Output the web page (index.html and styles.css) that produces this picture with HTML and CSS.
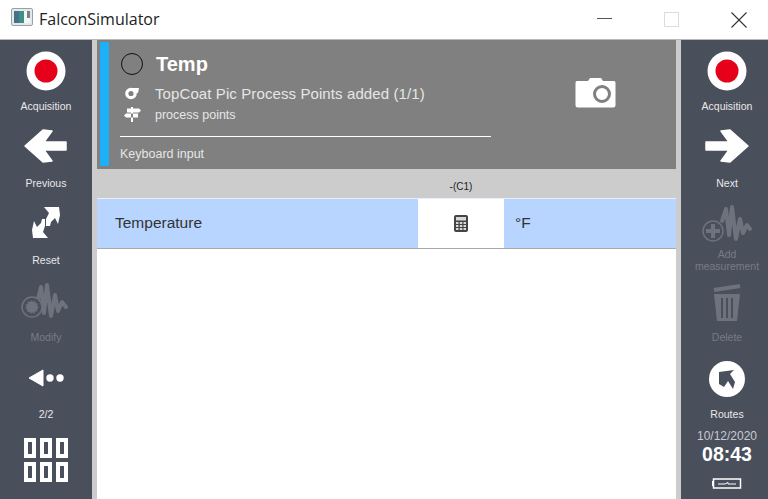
FILE: index.html
```html
<!DOCTYPE html>
<html lang="en">
<head>
<meta charset="utf-8">
<title>FalconSimulator</title>
<link rel="stylesheet" href="styles.css">
</head>
<body>
<div class="window">
  <header class="titlebar">
    <svg class="app-icon" width="22" height="18" viewBox="0 0 22 18">
      <rect x="0.5" y="0.5" width="21" height="17" rx="1.5" fill="#e4e8e8" stroke="#9aa3a4"/>
      <rect x="3" y="3" width="10" height="12" fill="#3f8f86"/>
      <rect x="3" y="3" width="5" height="12" fill="#47708a"/>
      <rect x="13" y="3" width="6" height="12" fill="#f4f6f6"/>
      <rect x="16" y="3" width="3" height="7" fill="#76828a"/>
    </svg>
    <span class="app-name">FalconSimulator</span>
    <div class="win-controls">
      <span class="win-btn"><span class="win-min"></span></span>
      <span class="win-btn"><span class="win-max"></span></span>
      <span class="win-btn">
        <svg width="16" height="16" viewBox="0 0 16 16"><path d="M0.5 0.5 15.5 15.5M15.5 0.5 0.5 15.5" stroke="#333" stroke-width="1.1" fill="none"/></svg>
      </span>
    </div>
  </header>

  <div class="app">
    <aside class="side side-left">
      <div class="tool">
        <svg width="60" height="56" viewBox="16 40 60 56"><circle cx="46" cy="71" r="19.5" fill="#fff"/><circle cx="46" cy="71" r="11.5" fill="#e60019"/></svg>
        <span class="tool-label">Acquisition</span>
      </div>
      <div class="tool">
        <svg width="60" height="56" viewBox="16 117 60 56"><path d="M25 146 43 130 52 131 44 142H66V150H44L52 161 43 162Z" fill="#fff" stroke="#fff" stroke-width="1.5" stroke-linejoin="round"/></svg>
        <span class="tool-label">Previous</span>
      </div>
      <div class="tool">
        <svg width="60" height="56" viewBox="16 194 60 56"><path d="M44 207H59L60 215 58 224 55 218 51 222 50 226H46V219L49 213Z" fill="#fff"/><path d="M48 238H33L32 230 34 221 37 227 41 223 42 219H45V226L43 232Z" fill="#fff"/></svg>
        <span class="tool-label">Reset</span>
      </div>
      <div class="tool">
        <svg width="60" height="56" viewBox="16 271 60 56"><path d="M38 299 41 287 44 313 47 285 51 316 55 295 58 311 62 302 66 307" fill="none" stroke="#6e727d" stroke-width="4" stroke-linejoin="round" stroke-linecap="round"/><circle cx="32" cy="307" r="10" fill="#4a4f5c" stroke="#6e727d" stroke-width="1.5"/><circle cx="32" cy="307" r="5.5" fill="#6e727d" stroke="#6e727d" stroke-width="2" stroke-dasharray="1.5 1.5"/></svg>
        <span class="tool-label tool-label-off">Modify</span>
      </div>
      <div class="tool">
        <svg width="60" height="56" viewBox="16 348 60 56"><path d="M29 378 43 370V386Z" fill="#fff" stroke="#fff" stroke-linejoin="round"/><circle cx="50" cy="378" r="3.7" fill="#fff"/><circle cx="60" cy="378" r="3.7" fill="#fff"/></svg>
        <span class="tool-label">2/2</span>
      </div>
      <div class="grid-btn">
        <span></span><span></span><span></span>
        <span></span><span></span><span></span>
      </div>
    </aside>

    <main class="main">
      <section class="card">
        <div class="card-bar"></div>
        <div class="card-info">
          <div class="card-title-row">
            <span class="status-ring"></span>
            <span class="card-title">Temp</span>
          </div>
          <div class="card-row">
            <svg class="card-icon" width="24" height="16" viewBox="0 0 24 16"><circle cx="11" cy="8.5" r="4.2" fill="none" stroke="#fff" stroke-width="3.2"/><path d="M11 3H19L18 8H14Z" fill="#fff"/></svg>
            <span class="card-text">TopCoat Pic Process Points added (1/1)</span>
          </div>
          <div class="card-row card-row-small">
            <svg class="card-icon" width="24" height="16" viewBox="0 0 24 16"><path d="M7 1.500H19L21 3.500 19 5.500H7ZM18 6.500H6L4 8.500 6 10.500H18ZM11 0H13V15H11Z" fill="#fff"/></svg>
            <span class="card-sub">process points</span>
          </div>
          <div class="card-input">Keyboard input</div>
        </div>
        <div class="card-camera">
          <svg width="41" height="31" viewBox="0 0 41 31"><path d="M2 4H13L15 1H26L28 4H39Q40.500 4 40.500 6V28Q40.500 30.500 38 30.500H3Q0.500 30.500 0.500 28V6Q0.500 4 2 4Z" fill="#fff"/><circle cx="27" cy="17" r="7.500" fill="none" stroke="#808080" stroke-width="3"/></svg>
        </div>
      </section>

      <div class="col-head">
        <span class="col-name"></span>
        <span class="col-value">-(C1)</span>
        <span class="col-unit"></span>
      </div>

      <div class="row">
        <span class="col-name">Temperature</span>
        <span class="col-value col-value-cell">
          <svg width="14" height="17" viewBox="0 0 14 17"><rect width="14" height="17" rx="2" fill="#444"/><rect x="2" y="2" width="10" height="3.500" fill="#d8d8d8"/><g fill="#d8d8d8"><rect x="2" y="7" width="2.500" height="2"/><rect x="5.800" y="7" width="2.500" height="2"/><rect x="9.500" y="7" width="2.500" height="2"/><rect x="2" y="10" width="2.500" height="2"/><rect x="5.800" y="10" width="2.500" height="2"/><rect x="9.500" y="10" width="2.500" height="2"/><rect x="2" y="13" width="2.500" height="2"/><rect x="5.800" y="13" width="2.500" height="2"/><rect x="9.500" y="13" width="2.500" height="2"/></g></svg>
        </span>
        <span class="col-unit">°F</span>
      </div>
    </main>

    <aside class="side side-right">
      <div class="tool">
        <svg width="60" height="56" viewBox="697 40 60 56"><circle cx="727" cy="71" r="19.5" fill="#fff"/><circle cx="727" cy="71" r="11.5" fill="#e60019"/></svg>
        <span class="tool-label">Acquisition</span>
      </div>
      <div class="tool">
        <svg width="60" height="56" viewBox="697 117 60 56"><path d="M748 146 730 130 721 131 729 142H706V150H729L721 161 730 162Z" fill="#fff" stroke="#fff" stroke-width="1.500" stroke-linejoin="round"/></svg>
        <span class="tool-label">Next</span>
      </div>
      <div class="tool">
        <svg width="60" height="54" viewBox="697 194 60 54"><path d="M722 221 726 209 729 235 732 207 736 239 740 219 743 233 747 225 750 229" fill="none" stroke="#6e727d" stroke-width="4" stroke-linejoin="round" stroke-linecap="round"/><circle cx="713" cy="231" r="10" fill="#4a4f5c" stroke="#6e727d" stroke-width="1.500"/><path d="M706 231H720M713 224V238" stroke="#6e727d" stroke-width="4"/></svg>
        <span class="tool-label tool-label-off tool-label-two">Add<br>measurement</span>
      </div>
      <div class="tool">
        <svg width="60" height="56" viewBox="697 271 60 56"><path d="M714 290 740 286" stroke="#6e727d" stroke-width="4"/><path d="M714 294H740L737 321H717Z" fill="#6e727d"/><path d="M722 298V318M727 298V318M732 298V318" stroke="#4a4f5c" stroke-width="2"/></svg>
        <span class="tool-label tool-label-off">Delete</span>
      </div>
      <div class="tool">
        <svg width="60" height="56" viewBox="697 348 60 56"><circle cx="727" cy="379" r="18" fill="#fff"/><path d="M719 372 734 370 730 374 735 382 733 389 728 381 724 387 719 384Z" fill="#4a4f5c"/></svg>
        <span class="tool-label">Routes</span>
      </div>
      <div class="clock-date">10/12/2020</div>
      <div class="clock-time">08:43</div>
      <svg class="battery" width="30" height="11" viewBox="0 0 30 11"><rect x="1.500" y="1" width="27" height="9" fill="none" stroke="#fff" stroke-width="1.500"/><rect x="0" y="3" width="1" height="5" fill="#fff"/><path d="M6 6H13L16 4.500 16 6H24" stroke="#fff" fill="none"/></svg>
    </aside>
  </div>
</div>
</body>
</html>
```

FILE: styles.css
```css
* { box-sizing: border-box; }
html, body { margin: 0; padding: 0; }
body { background: #fff; font-family: "Liberation Sans", Arial, sans-serif; overflow: hidden; }
.window { width: 768px; height: 499px; display: flex; flex-direction: column; overflow: hidden; }

.titlebar { height: 40px; flex: none; display: flex; align-items: center; padding-left: 11px; background: #fff; border-bottom: 1px solid #b9b9b9; }
.app-icon { flex: none; margin-top: -5px; }
.app-name { margin-left: 6px; font-family: "Open Sans", sans-serif; font-size: 16px; color: #222; margin-top: -1px; }
.win-controls { margin-left: auto; margin-right: -4px; display: flex; align-items: center; height: 39px; }
.win-btn { width: 67px; display: flex; justify-content: center; align-items: center; }
.win-min { display: block; width: 15px; height: 1px; background: #555; margin-top: -3px; }
.win-max { display: block; width: 15px; height: 15px; border: 1px solid #dcdcdc; }

.app { flex: 1; display: flex; min-height: 0; background: #cccccc; }
.side { flex: none; background: #4a4f5c; display: flex; flex-direction: column; align-items: center; }
.side-left { width: 92px; }
.side-right { width: 87px; padding-left: 5px; }

.tool { height: 77px; flex: none; width: 80px; display: flex; flex-direction: column; align-items: center; }
.tool svg { display: block; flex: none; }
.tool-label { display: block; line-height: 20px; font-size: 10.5px; color: #e8e8e8; text-align: center; white-space: nowrap; }
.tool-label-off { color: #777b86; }
.tool-label-two { line-height: 12px; }

.grid-btn { display: grid; grid-template-columns: repeat(3, 12px); grid-template-rows: repeat(2, 20px); gap: 4px; margin-top: 13px; }
.grid-btn span { border: 4px solid #fff; }

.main { flex: 1; min-width: 0; margin: 0 5px; display: flex; flex-direction: column; background: #fff; }

.card { height: 129px; flex: none; background: #808080; padding: 2px 3px 3px; display: flex; }
.card-bar { width: 9px; flex: none; background: #1cb0f6; }
.card-info { width: 371px; margin-left: 11px; flex: none; color: #e6e6e6; display: flex; flex-direction: column; padding-top: 6px; }
.card-title-row { height: 32px; flex: none; display: flex; align-items: center; }
.status-ring { width: 22px; height: 22px; border-radius: 50%; border: 1.5px solid #111; margin-left: 1px; }
.card-title { margin-left: 13px; font-size: 20px; font-weight: 700; color: #fff; }
.card-row { display: flex; align-items: center; height: 26px; flex: none; }
.card-row-small { height: 18px; }
.card-icon { flex: none; margin-right: 11px; }
.card-text { font-size: 15px; letter-spacing: 0.1px; white-space: nowrap; }
.card-sub { font-size: 12.5px; }
.card-input { margin-top: 12px; border-top: 1px solid #fff; padding-top: 9px; font-size: 12.5px; line-height: 16px; }
.card-camera { margin-left: 84px; margin-top: 35px; }
.card-camera svg { display: block; }

.col-head { height: 29px; flex: none; display: flex; align-items: center; background: #cccccc; font-size: 10px; color: #222; padding-top: 5px; }
.row { height: 51px; flex: none; display: flex; background: #b7d5ff; border-top: 1px solid #e6effb; border-bottom: 1px solid #a9a9a9; font-size: 15.5px; color: #333; align-items: stretch; }
.col-name { width: 321px; flex: none; padding-left: 18px; padding-bottom: 2px; display: flex; align-items: center; }
.col-value { width: 86px; flex: none; text-align: center; }
.col-value-cell { background: #fff; display: flex; align-items: center; justify-content: center; }
.col-value-cell svg { display: block; }
.col-unit { flex: 1; padding-left: 11px; padding-bottom: 2px; display: flex; align-items: center; }

.clock-date { margin-top: 2px; font-size: 12px; line-height: 18px; color: #c9cbd0; }
.clock-time { font-size: 19.5px; font-weight: 700; line-height: 18px; color: #fff; }
.battery { display: block; margin-top: 15px; }
```
